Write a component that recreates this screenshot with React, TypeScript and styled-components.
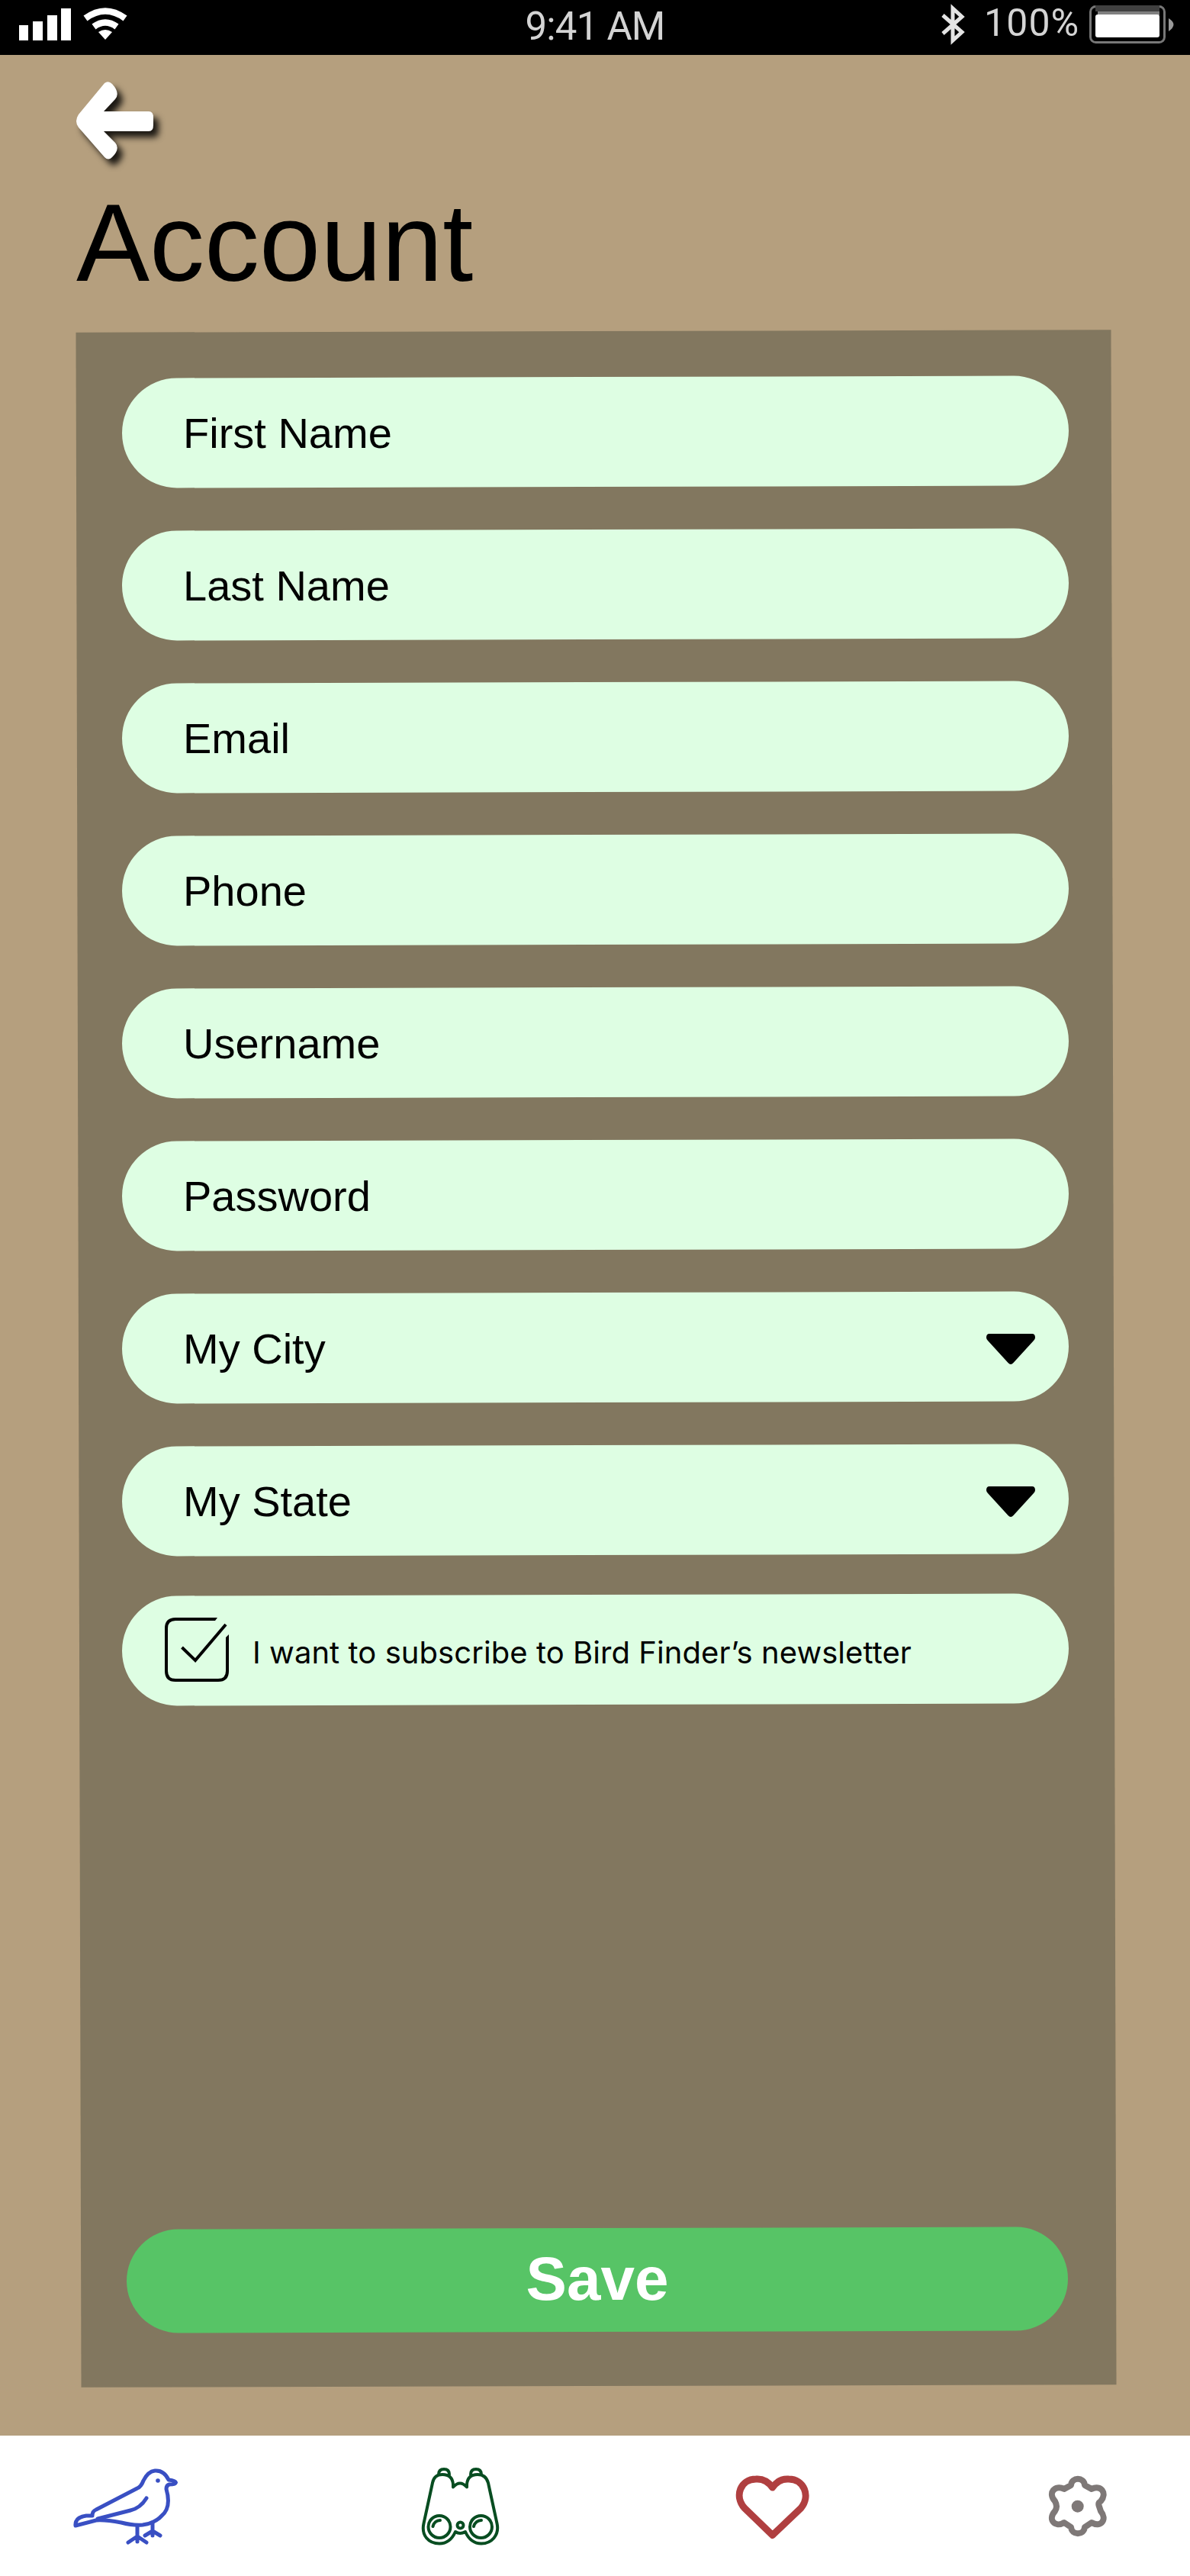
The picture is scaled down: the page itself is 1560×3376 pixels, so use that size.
import React from "react";
import styled, { createGlobalStyle } from "styled-components";

const Global = createGlobalStyle`
  *, *::before, *::after { box-sizing: border-box; }
  body { margin: 0; background: #b59f7e; }
  button, input { font: inherit; color: inherit; border: 0; background: none; padding: 0; margin: 0; }
  svg { display: block; overflow: visible; }
`;

const Screen = styled.div`
  width: 1560px;
  height: 3376px;
  display: flex;
  flex-direction: column;
  overflow: hidden;
  background: #b59f7e;
  color: #000;
  font-family: "Liberation Sans", Arial, sans-serif;
`;

const StatusBar = styled.header`
  flex: none;
  height: 72px;
  display: grid;
  grid-template-columns: 1fr auto 1fr;
  background: #000;
  color: #d4d4d4;
  font-family: Roboto, sans-serif;
`;

const StatusGroup = styled.div<{ $end?: boolean }>`
  display: flex;
  align-items: flex-start;
  justify-content: ${(p) => (p.$end ? "flex-end" : "flex-start")};
  padding: ${(p) => (p.$end ? "0 20px 0 0" : "10px 0 0 24px")};
  gap: ${(p) => (p.$end ? "0" : "14px")};
`;

const StatusIcon = styled.svg`
  margin-top: 7px;
`;

const Clock = styled.span`
  padding-top: 9px;
  font-size: 51px;
  letter-spacing: -0.8px;
  line-height: 52px;
`;

const Percent = styled.span`
  width: 127px;
  margin: 0 11px 0 26px;
  font-size: 50px;
  letter-spacing: 1.1px;
  line-height: 60px;
`;

const Head = styled.div`
  flex: none;
  height: 362px;
  display: flex;
  flex-direction: column;
  align-items: flex-start;
  padding: 35px 0 0 100px;
`;

const BackButton = styled.button`
  width: 101px;
  height: 102px;
  filter: drop-shadow(7px 8px 4px rgba(0, 0, 0, 0.85));
`;

const Title = styled.h1`
  margin: 30px 0 0;
  font-size: 144px;
  line-height: 160px;
  font-weight: 400;
`;

const TILT = "rotate(-0.15deg)";

const Panel = styled.form`
  flex: none;
  position: relative;
  z-index: 0;
  width: 1357px;
  height: 2693px;
  margin-left: 103px;
  padding: 60px 59px 71px 57px;
  display: flex;
  flex-direction: column;

  &::before {
    content: "";
    position: absolute;
    inset: 0;
    z-index: -1;
    background: #82775f;
    transform: ${TILT};
  }
`;

const Field = styled.label<{ $tight?: boolean }>`
  position: relative;
  z-index: 0;
  flex: none;
  height: 144px;
  margin-bottom: ${(p) => (p.$tight ? "52px" : "56px")};
  padding: 0 44px 0 80px;
  display: flex;
  align-items: center;
  justify-content: space-between;
  font-size: 56px;
  line-height: 64px;

  &::before {
    content: "";
    position: absolute;
    inset: 0;
    z-index: -1;
    border-radius: 72px;
    background: #defee3;
    transform: ${TILT};
  }
`;

const FieldText = styled.span`
  padding-top: 4px;
`;

const Newsletter = styled(Field)`
  margin-bottom: auto;
  padding-left: 56px;
  justify-content: flex-start;
  gap: 31px;
`;

const NewsletterText = styled.span`
  padding-top: 8px;
  font-family: Inter, sans-serif;
  font-size: 40px;
  letter-spacing: 0.06px;
  line-height: 48px;
`;

const Save = styled.button`
  && {
    position: relative;
    z-index: 0;
    flex: none;
    height: 136px;
    margin: 0 1px 0 6px;
    padding-bottom: 3px;
    color: #fff;
    font-size: 80px;
    line-height: 92px;
    font-weight: 700;
  }

  &::before {
    content: "";
    position: absolute;
    inset: 0;
    z-index: -1;
    border-radius: 68px;
    background: #57c466;
    transform: ${TILT};
  }
`;

const TabBar = styled.nav`
  flex: none;
  height: 184px;
  margin-top: auto;
  display: flex;
  align-items: flex-start;
  background: #fff;
`;

const Tab = styled.a<{ $top: number; $gap: number }>`
  flex: none;
  margin-top: ${(p) => p.$top}px;
  margin-left: ${(p) => p.$gap}px;
`;

const CaretIcon = styled.svg`
  margin-top: 4px;
`;

const Caret = () => (
  <CaretIcon width="64" height="40" viewBox="0 0 64 40">
    <path d="M4 0H60Q64 0 64 5Q64 7 62 9L35.500 38Q32 42 28.500 38L2 9Q0 7 0 5Q0 0 4 0Z" />
  </CaretIcon>
);

const Checkbox = () => (
  <svg width="84" height="84" viewBox="0 0 84 84" fill="none" stroke="#000" strokeWidth="4">
    <path d="M69 0L66 4H14Q4 4 4 14V70Q4 80 14 80H70Q80 80 80 70V26L84 22V70Q84 84 70 84H14Q0 84 0 70V14Q0 0 14 0Z" fill="#000" stroke="none" />
    <path d="M22.500 39L40 56L80 9" />
  </svg>
);

const fields = ["First Name", "Last Name", "Email", "Phone", "Username", "Password", "My City", "My State"];

export default function App() {
  return (
    <>
      <Global />
      <Screen>
        <StatusBar>
          <StatusGroup>
            <svg width="71" height="43" viewBox="0 0 71 43" fill="#fff">
              <path d="M1 23h12v20H1zM19 18h13v25H19zM38 10h13v33H38zM56 1h13v42H56z" />
            </svg>
            <svg width="58" height="42" viewBox="0 0 58 42" fill="none" stroke="#fff" strokeWidth="8.500">
              <path d="M3 14Q29 -5 55 14M14 25Q29 14 44 25" />
              <path d="M29 42L20 32Q29 26 38 32Z" fill="#fff" stroke="none" />
            </svg>
          </StatusGroup>
          <Clock>9:41 AM</Clock>
          <StatusGroup $end>
            <StatusIcon width="30" height="50" viewBox="0 0 30 50" fill="none" stroke="#e4e4e4" strokeWidth="5">
              <path d="M2 13L27 35L15 46V4L27 15L2 37" />
            </StatusIcon>
            <Percent>100%</Percent>
            <StatusIcon width="112" height="50" viewBox="0 0 112 50">
              <rect x="1.500" y="1.500" width="97" height="47" rx="7" fill="none" stroke="#777" strokeWidth="3" />
              <path d="M8 0H92V8H8Z" fill="#404040" />
              <path d="M11 8H92V13H11Z" fill="#808080" />
              <rect x="8" y="12" width="84" height="30" rx="3" fill="#fff" />
              <path d="M104 17Q117 25 104 34Z" fill="#999" />
            </StatusIcon>
          </StatusGroup>
        </StatusBar>

        <Head>
          <BackButton type="button" aria-label="Back">
            <svg width="101" height="102" viewBox="0 0 101 102" fill="#fff">
              <path d="M37 2Q42 -2 47 3Q58 15 51 23L36 39H95Q101 39 101 47V57Q101 65 95 65H36L51 80Q58 88 47 99Q42 104 37 99L3 60Q-3 52 3 43Z" />
            </svg>
          </BackButton>
          <Title>Account</Title>
        </Head>

        <Panel>
          {fields.map((name) => (
            <Field key={name} $tight={name === "My State"}>
              <FieldText>{name}</FieldText>
              {name.startsWith("My") && <Caret />}
            </Field>
          ))}
          <Newsletter>
            <Checkbox />
            <NewsletterText>I want to subscribe to Bird Finder’s newsletter</NewsletterText>
          </Newsletter>
          <Save type="button">Save</Save>
        </Panel>

        <TabBar>
          <Tab $top={43} $gap={96}>
            <svg width="138" height="100" viewBox="96 3235 138 100" fill="none" stroke="#394fc3" strokeWidth="5" strokeLinecap="round" strokeLinejoin="round">
              <path d="M99 3310Q98 3299 113 3297L121 3297Q121 3291 126 3289L180 3261Q185 3259 188 3251Q194 3239 203 3238Q215 3237 221 3250Q230 3251 230.500 3253.500Q230 3256 222 3256Q218 3257 218 3262Q225 3286 212 3297Q203 3307 187 3309Q174 3310 159 3306Q137 3302 126 3303Z" />
              <path d="M128 3301L171 3290Q184 3287 192 3274M180 3310V3331M180 3324L168 3332M180 3324L192 3332M200 3306V3323M200 3317L190 3323M200 3317L210 3323" />
              <circle cx="207" cy="3251" r="2.800" fill="#394fc3" stroke="none" />
            </svg>
          </Tab>
          <Tab $top={42} $gap={319}>
            <svg width="100" height="102" viewBox="553 3234 100 102" fill="none" stroke="#084d21" strokeWidth="4" strokeLinecap="round" strokeLinejoin="round">
              <path d="M594 3259.500V3256Q593 3243 580 3243Q569 3243 567 3254L555.500 3307C552 3323 562 3333.500 576 3333.500Q590 3333.500 597 3318Q603 3322 610 3318Q617 3333.500 631 3333.500C644 3333.500 655 3323 651.500 3307L640 3254Q637 3243 626 3243Q613 3243 612 3256V3259.500Q603 3249.500 594 3259.500Z" />
              <path d="M575 3243Q575 3236 582 3236Q589 3236 589 3243M617 3243Q617 3236 624 3236Q631 3236 631 3243M567.500 3311A10 10 0 0 1 577 3303M621 3311A10 10 0 0 1 631 3303" />
              <circle cx="576" cy="3311.500" r="14.500" />
              <circle cx="630.500" cy="3311.500" r="14.500" />
              <circle cx="603.500" cy="3309.500" r="4" />
            </svg>
          </Tab>
          <Tab $top={52} $gap={311}>
            <svg width="98" height="84" viewBox="964 3244 98 84" fill="none" stroke="#b03f40" strokeWidth="9" strokeLinejoin="round">
              <path d="M1012.700 3322.500L976 3287C962 3271 971 3249 991 3249Q1004 3248 1012.700 3260Q1021 3248 1034 3249C1054 3249 1063 3271 1050 3287Z" />
            </svg>
          </Tab>
          <Tab $top={52} $gap={313}>
            <svg width="76" height="82" viewBox="1375 3244 76 82" fill="none" stroke="#7e7877" strokeWidth="8" strokeLinejoin="round">
              <path d="M1404 3257C1405 3246 1421 3246 1422 3257L1431 3262C1443 3256 1452 3267 1443 3278Q1439 3280 1441 3285L1443 3291C1452 3302 1443 3313 1431 3306L1422 3312C1421 3323 1405 3323 1404 3312L1395 3306C1383 3313 1373 3302 1383 3291Q1387 3285 1383 3278C1373 3267 1383 3256 1395 3262Z" />
              <circle cx="1412.700" cy="3284.700" r="8" fill="#7e7877" stroke="none" />
            </svg>
          </Tab>
        </TabBar>
      </Screen>
    </>
  );
}
